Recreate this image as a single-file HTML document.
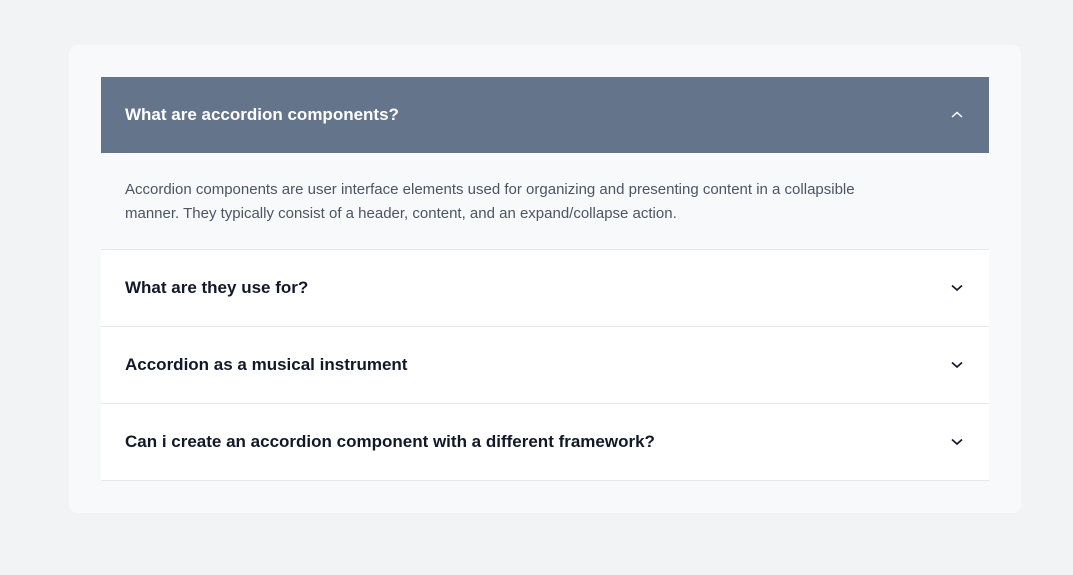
<!DOCTYPE html>
<html><head><style>
body{margin:0;background:#f2f3f5;font-family:"Liberation Sans",sans-serif;width:1073px;height:575px;overflow:hidden}
.card{position:absolute;left:69px;top:45px;width:952px;height:468px;background:#f8f9fb;border-radius:8px}
.acc{position:absolute;left:32px;top:32px;width:888px}
.h{height:77px;display:flex;align-items:center;justify-content:space-between;padding:0 24px;box-sizing:border-box;font-size:17px;font-weight:bold;color:#111827;background:#fff;border-bottom:1px solid #e5e7eb}
.h.first{height:76px;background:#64748b;color:#fff;border-bottom:none}
.body{height:97px;box-sizing:border-box;padding:25px 24px 0;font-size:15px;line-height:24px;color:#4b5563;background:#f8f9fa;border-bottom:1px solid #e5e7eb}
.body div{width:765px}
svg{width:16px;height:16px}
</style></head><body>
<div class="card"><div class="acc">
<div class="h first">What are accordion components?<svg viewBox="0 0 16 16"><path d="M3 10L8 5.5 13 10" fill="none" stroke="#fff" stroke-width="1.5"/></svg></div>
<div class="body"><div>Accordion components are user interface elements used for organizing and presenting content in a collapsible manner. They typically consist of a header, content, and an expand/collapse action.</div></div>
<div class="h">What are they use for?<svg viewBox="0 0 16 16"><path d="M3 5.5L8 10 13 5.5" fill="none" stroke="#111827" stroke-width="1.7"/></svg></div>
<div class="h">Accordion as a musical instrument<svg viewBox="0 0 16 16"><path d="M3 5.5L8 10 13 5.5" fill="none" stroke="#111827" stroke-width="1.7"/></svg></div>
<div class="h">Can i create an accordion component with a different framework?<svg viewBox="0 0 16 16"><path d="M3 5.5L8 10 13 5.5" fill="none" stroke="#111827" stroke-width="1.7"/></svg></div>
</div></div>
</body></html>
